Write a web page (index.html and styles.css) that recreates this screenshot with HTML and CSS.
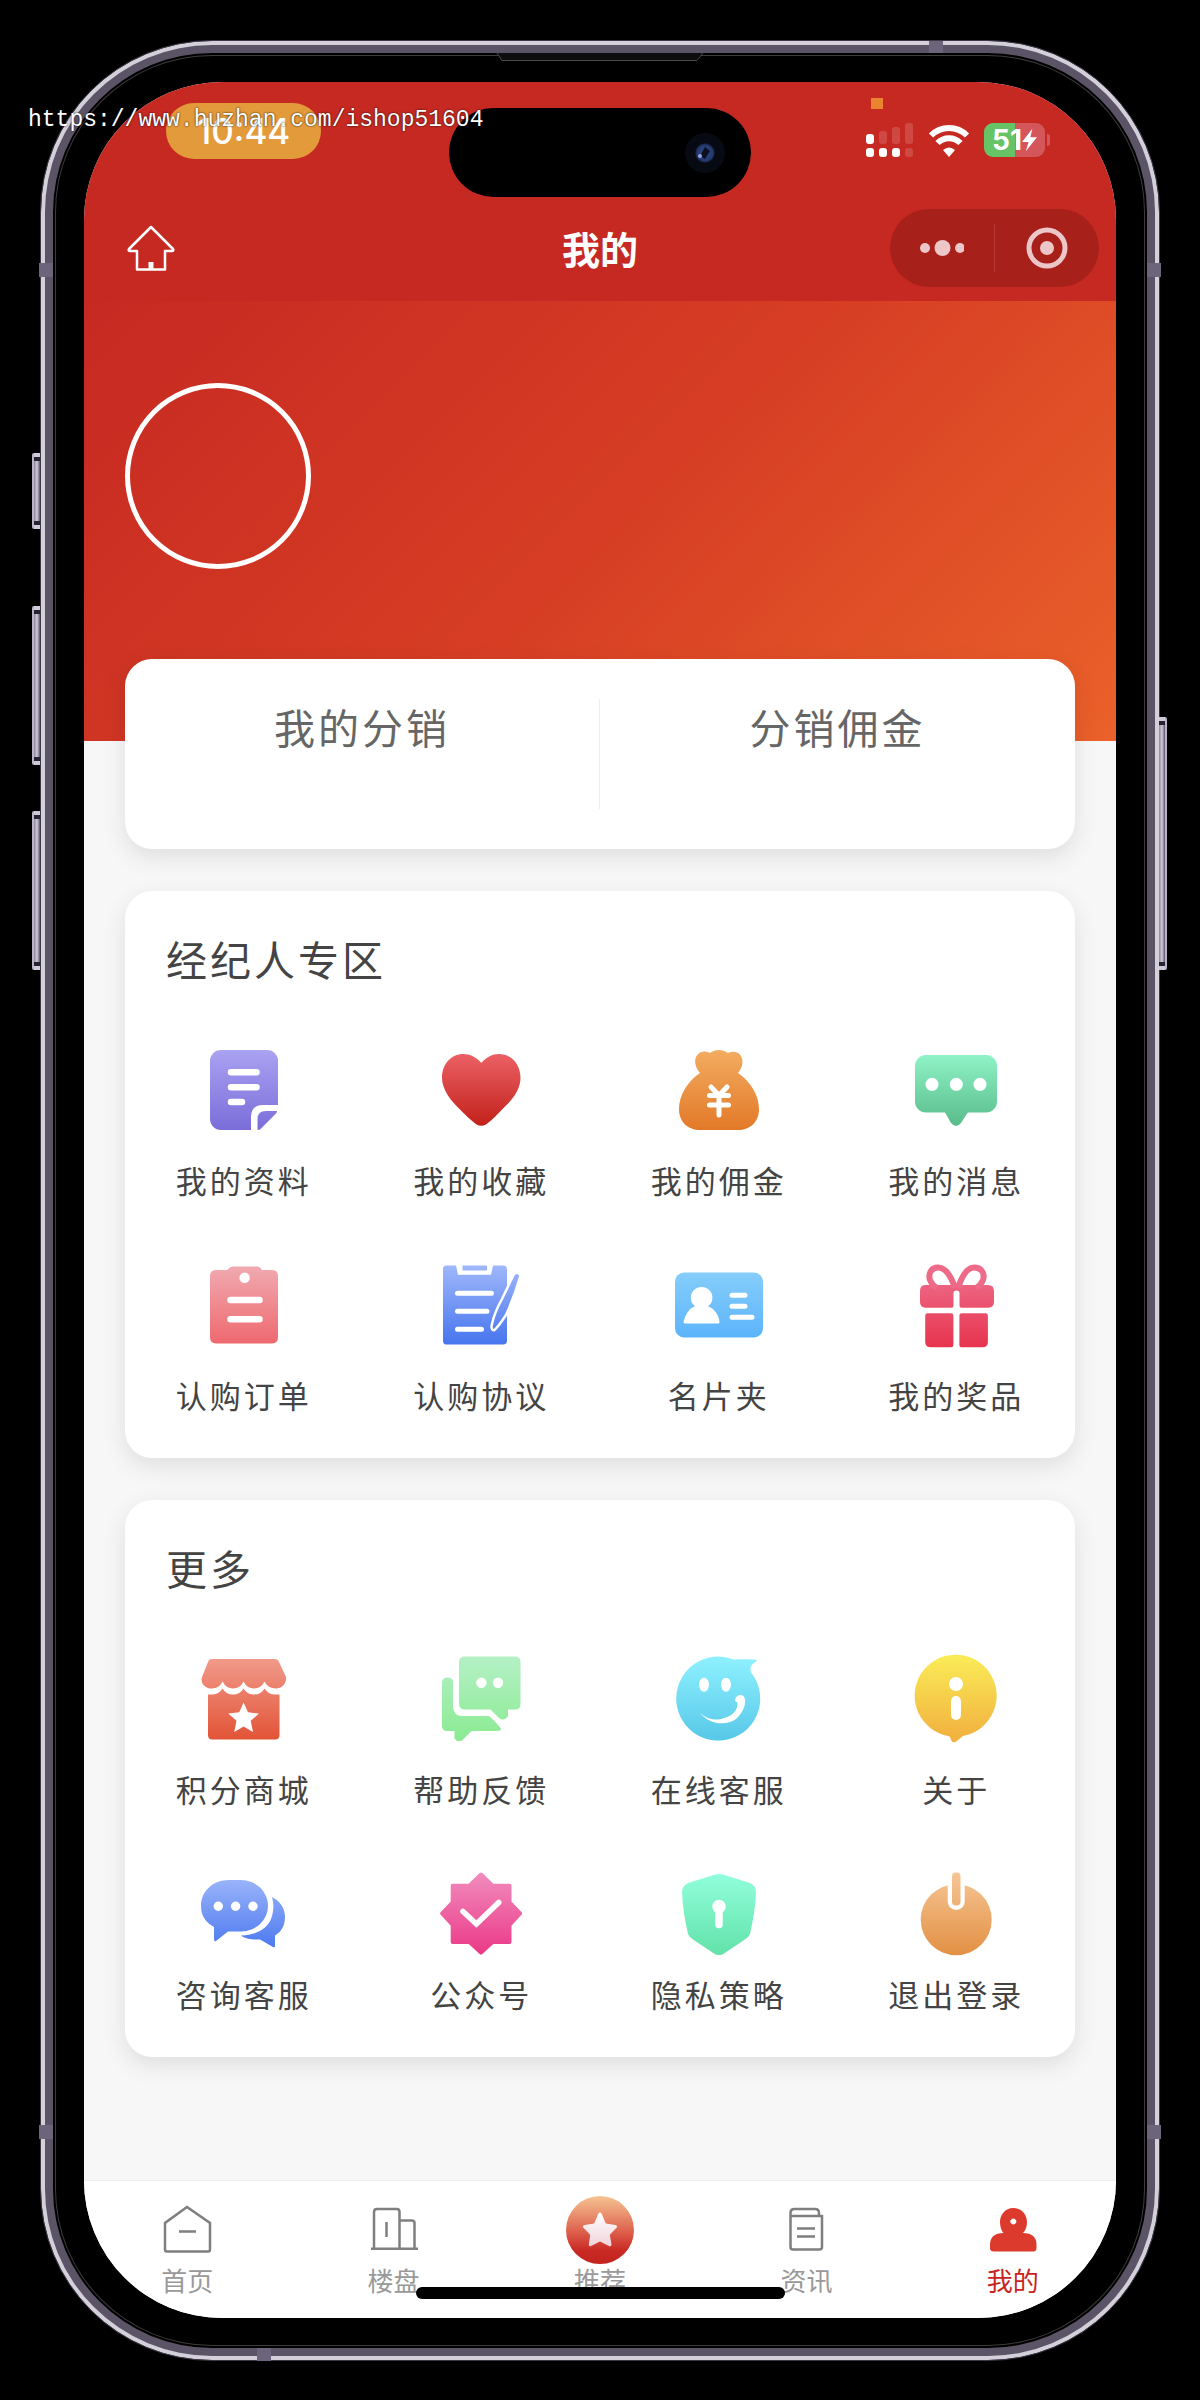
FILE: index.html
```html
<!DOCTYPE html>
<html lang="zh-CN">
<head>
<meta charset="utf-8">
<meta name="viewport" content="width=device-width, initial-scale=1">
<title>我的</title>
<link rel="stylesheet" href="styles.css">
</head>
<body>
<svg class="defs" aria-hidden="true">
  <defs>
    <linearGradient id="violet" gradientUnits="userSpaceOnUse" x1="0" y1="5" x2="0" y2="85"><stop stop-color="#aaa2f2"/><stop offset="1" stop-color="#7b6dd9"/></linearGradient>
    <linearGradient id="red" gradientUnits="userSpaceOnUse" x1="0" y1="5" x2="0" y2="80"><stop stop-color="#ed6469"/><stop offset="1" stop-color="#c3221b"/></linearGradient>
    <linearGradient id="orange" gradientUnits="userSpaceOnUse" x1="0" y1="5" x2="0" y2="85"><stop stop-color="#f3ac61"/><stop offset="1" stop-color="#e27928"/></linearGradient>
    <linearGradient id="green" gradientUnits="userSpaceOnUse" x1="0" y1="8" x2="0" y2="80"><stop stop-color="#90f4c8"/><stop offset="1" stop-color="#59bc8b"/></linearGradient>
    <linearGradient id="salmon" gradientUnits="userSpaceOnUse" x1="0" y1="5" x2="0" y2="85"><stop stop-color="#f0abb1"/><stop offset="1" stop-color="#ee686e"/></linearGradient>
    <linearGradient id="blue" gradientUnits="userSpaceOnUse" x1="0" y1="5" x2="0" y2="83"><stop stop-color="#a0b8fb"/><stop offset="1" stop-color="#4876ee"/></linearGradient>
    <linearGradient id="sky" gradientUnits="userSpaceOnUse" x1="0" y1="10" x2="0" y2="78"><stop stop-color="#87cefb"/><stop offset="1" stop-color="#5bb4fa"/></linearGradient>
    <linearGradient id="rose" gradientUnits="userSpaceOnUse" x1="0" y1="5" x2="0" y2="86"><stop stop-color="#ef7391"/><stop offset="1" stop-color="#e7344f"/></linearGradient>
    <linearGradient id="brick" gradientUnits="userSpaceOnUse" x1="0" y1="5" x2="0" y2="86"><stop stop-color="#f19a8a"/><stop offset="1" stop-color="#e25336"/></linearGradient>
    <linearGradient id="mint" gradientUnits="userSpaceOnUse" x1="0" y1="4" x2="0" y2="86"><stop stop-color="#b4f0c5"/><stop offset="1" stop-color="#8aeb92"/></linearGradient>
    <linearGradient id="cyan" gradientUnits="userSpaceOnUse" x1="0" y1="4" x2="0" y2="88"><stop stop-color="#8ef0ff"/><stop offset="1" stop-color="#56c7e7"/></linearGradient>
    <linearGradient id="yellow" gradientUnits="userSpaceOnUse" x1="0" y1="4" x2="0" y2="86"><stop stop-color="#faea56"/><stop offset="1" stop-color="#f1b03f"/></linearGradient>
    <linearGradient id="pink" gradientUnits="userSpaceOnUse" x1="0" y1="5" x2="0" y2="86"><stop stop-color="#f18abd"/><stop offset="1" stop-color="#eb3886"/></linearGradient>
    <linearGradient id="jade" gradientUnits="userSpaceOnUse" x1="0" y1="6" x2="0" y2="86"><stop stop-color="#90fedb"/><stop offset="1" stop-color="#62e2a9"/></linearGradient>
    <linearGradient id="amber" gradientUnits="userSpaceOnUse" x1="0" y1="5" x2="0" y2="86"><stop stop-color="#f6c594"/><stop offset="1" stop-color="#e29043"/></linearGradient>
    <linearGradient id="sunset" x1="0" y1="0" x2="0" y2="1"><stop stop-color="#f6c492"/><stop offset=".5" stop-color="#df6550"/><stop offset=".8" stop-color="#c92a24"/><stop offset="1" stop-color="#c3231e"/></linearGradient>
    <linearGradient id="starlight" x1="0" y1="0" x2="0" y2="1"><stop stop-color="#fff"/><stop offset="1" stop-color="#f0d3db"/></linearGradient>
    <radialGradient id="lens"><stop stop-color="#10131f"/><stop offset=".35" stop-color="#2c4480"/><stop offset=".8" stop-color="#24386c"/><stop offset="1" stop-color="#0b1120"/></radialGradient>
  </defs>
</svg>

<div class="phone">
  <span class="side-key side-key--mute"></span>
  <span class="side-key side-key--up"></span>
  <span class="side-key side-key--down"></span>
  <span class="side-key side-key--power"></span>
  <span class="band band--left-top"></span>
  <span class="band band--right-top"></span>
  <span class="band band--left-bottom"></span>
  <span class="band band--right-bottom"></span>
  <span class="band band--top"></span>
  <span class="band band--bottom"></span>
  <svg class="earpiece" viewBox="0 0 208 9" aria-hidden="true"><path d="M1 0L6 7.500H201L207 0" fill="#0d0d0d" stroke="#4a4a4a"/></svg>

  <div class="screen">
    <header class="topbar">
      <div class="status">
        <span class="status__time">10:44</span>
        <div class="status__icons">
          <svg width="48" height="36" viewBox="0 0 48 36" fill="#fff" aria-label="信号">
            <rect y="11" width="8" height="10" rx="3"/><rect y="25" width="8" height="9" rx="3"/>
            <rect x="13" y="25" width="8" height="9" rx="3"/><rect x="26" y="25" width="8" height="9" rx="3"/>
            <g opacity=".15"><rect x="13" y="8" width="8" height="13" rx="3"/><rect x="26" y="4" width="8" height="17" rx="3"/><rect x="39" width="8" height="21" rx="3"/><rect x="39" y="25" width="8" height="9" rx="3"/></g>
          </svg>
          <svg width="42" height="36" viewBox="0 0 42 36" aria-label="无线网络">
            <g fill="none" stroke="#fff" stroke-width="6"><path d="M3 12.500C13 2.500 29 2.500 39 12.500"/><path d="M9.500 20C16 13.500 26 13.500 32.500 20"/></g>
            <path d="M15 27Q21 22 27 27L21 34z" fill="#fff"/>
          </svg>
          <div class="battery">
            <span class="battery__level">51</span>
            <svg class="battery__bolt" viewBox="0 0 16 24" aria-hidden="true"><path d="M11 0L0 14H7L4 24L16 9H9z" fill="#fff"/></svg>
          </div>
        </div>
      </div>
      <div class="nav">
        <button class="nav__home" type="button" aria-label="首页">
          <svg viewBox="0 0 48 46" fill="none" stroke="#fff" stroke-width="2.500" stroke-linejoin="round"><path d="M24 2L46 24Q47 26 45 26H38V44.500H10V26H3Q1 26 2 24z"/><path d="M24 37V44" stroke-width="5"/></svg>
        </button>
        <h1 class="nav__title">我的</h1>
        <div class="capsule">
          <button type="button" aria-label="更多"><svg viewBox="0 0 44 44" fill="#ecc6c9"><circle cx="5" cy="22" r="5"/><circle cx="22.500" cy="22" r="8"/><circle cx="40" cy="22" r="5"/></svg></button>
          <button type="button" aria-label="关闭"><svg viewBox="0 0 44 44"><circle cx="22" cy="22" r="18" fill="none" stroke="#ecc6c9" stroke-width="5"/><circle cx="22" cy="22" r="7" fill="#ecc6c9"/></svg></button>
        </div>
      </div>
      <span class="island"><svg viewBox="0 0 40 40" aria-hidden="true"><circle cx="20" cy="20" r="20" fill="#070a12"/><circle cx="20" cy="20" r="10" fill="url(#lens)"/><path d="M15 23L20 14L25 18L20 26z" fill="#0c1020"/><circle cx="15" cy="23" r="2" fill="#8fa6de"/></svg></span>
      <span class="rec"></span>
    </header>

    <main class="content">
      <section class="hero"><div class="avatar"></div></section>

      <div class="cards">
        <section class="card stats">
          <a href="#team">我的分销</a>
          <a href="#commission">分销佣金</a>
        </section>

        <section class="card menu">
          <h2>经纪人专区</h2>
          <div class="menu__grid">
            <a class="item" href="#profile">
              <svg viewBox="0 0 90 90"><g fill="url(#violet)"><path d="M22 5H68a11 11 0 0 1 11 11V60H64Q52 60 52 72V85H22A11 11 0 0 1 11 74V16A11 11 0 0 1 22 5z"/><path d="M78 66H67Q58.500 66 58.500 74V85L61 84.500L77.500 68z"/></g><path d="M32 27.300H57.500M32 42.300H57.500M32 57H43" stroke="#fff" stroke-width="6.500" stroke-linecap="round"/></svg>
              <span>我的资料</span></a>
            <a class="item" href="#favorites">
              <svg viewBox="0 0 90 90"><path fill="url(#red)" d="M45.300 17.700C40 12 34 9 27.500 9C15 9 6 19 6 33C6 43 13 53 20 60.500C28 69 36 76 40.500 79.500Q45.300 82 50 79.500C55 76 62 69 70 60.500C78 53 84.500 43 84.500 33C84.500 19 75 9 63 9C56 9 51 12 45.300 17.700z"/></svg>
              <span>我的收藏</span></a>
            <a class="item" href="#money">
              <svg viewBox="0 0 90 90"><path fill="url(#orange)" d="M26 28C20 21 19 12 26 7.500C30 6 33 6.500 36 8C41 4 49 4 54 8C58 6 63 6 66 9.500C70 15 69 22 64 28C76 36 85 50 85 64C85 77 76 85 64 85H26C14 85 5 77 5 64C5 50 14 36 26 28z"/><path d="M37 42L45 50.500L53 42M45 50.500V70M35.500 50.500H54.500M35.500 60H54.500" fill="none" stroke="#fff" stroke-width="5" stroke-linecap="round"/></svg>
              <span>我的佣金</span></a>
            <a class="item" href="#messages">
              <svg viewBox="0 0 90 90"><path fill="url(#green)" d="M15 10H75a11 11 0 0 1 11 11V56.500a11 11 0 0 1-11 11H57Q55 70 50 78Q45 84 40 78L34 67.500H15a11 11 0 0 1-11-11V21A11 11 0 0 1 15 10z"/><g fill="#fff"><circle cx="21" cy="39.300" r="6.500"/><circle cx="45.300" cy="39.300" r="6.500"/><circle cx="69" cy="39.300" r="6.500"/></g></svg>
              <span>我的消息</span></a>
            <a class="item" href="#orders">
              <svg viewBox="0 0 90 90"><path fill="url(#salmon)" d="M17 10H28Q31 6.500 34 6.500H58Q61 6.500 63 10H73q6 0 6 6V77q0 6.500-6 6.500H17q-6 0-6-6.500V16q0-6 6-6z"/><circle cx="45.600" cy="17.700" r="5.200" fill="#fff"/><path d="M31.500 40H60.500M31.500 59.300H60.500" stroke="#fff" stroke-width="6.500" stroke-linecap="round"/></svg>
              <span>认购订单</span></a>
            <a class="item" href="#agreement">
              <svg viewBox="0 0 90 90"><g fill="url(#blue)"><path d="M10 5.500H20L22 14.700H55L57 5.500H67q4 0 4 4V80.500q0 4-4 4H10q-3 0-3-4V9q0-3.500 3-3.500z"/><path d="M26.500 5.500H51V10.500H26.500z"/><path d="M77.500 15C80 11 85 13 84 17C80 31 75 44 70 55C66 61 62 67 58.500 70C55.500 71 55 67 56 64C58 55 62 46 66 39z" stroke="#fff" stroke-width="2.500"/></g><path d="M21.500 33.300H55.500M21.500 51.300H51M21.500 69.300H45.500" stroke="#fff" stroke-width="5" stroke-linecap="round"/></svg>
              <span>认购协议</span></a>
            <a class="item" href="#cards">
              <svg viewBox="0 0 90 90"><rect x="1" y="12.500" width="88" height="65" rx="9" fill="url(#sky)"/><g fill="#fff"><circle cx="27.600" cy="37.700" r="10.800"/><path d="M22 46H33C40 48 45 55 45.500 62Q45.500 63.500 44 63.500H11Q9.500 63.500 9.500 62C11 55 15 48 22 46z"/></g><path d="M58 35.300H71M58 46.300H71M58 57.300H78" stroke="#fff" stroke-width="5" stroke-linecap="round"/></svg>
              <span>名片夹</span></a>
            <a class="item" href="#prizes">
              <svg viewBox="0 0 90 90"><g fill="url(#rose)"><path d="M14 25H77q6 0 6 6V42q0 5.700-6 5.700H50.500Q48.500 47.700 48.500 45.700V33Q48.500 30.500 45.500 30.500T42.500 33V45.700Q42.500 47.700 40.500 47.700H14.500Q9 47.700 9 42V31q0-6 5-6z"/><path d="M16.500 53.300H40q2.400 0 2.400 2.400V85q0 2.300-2.400 2.300H20q-5.800 0-5.800-5.300V55.700q0-2.400 2.300-2.400z"/><path d="M51 53.300H74.500q2.400 0 2.400 2.400V82q0 5.300-5.500 5.300H51q-2.600 0-2.600-2.300V55.700q0-2.400 2.600-2.400z"/></g><path d="M44 28C39 13 33 7.500 27 7.500C20 7.500 17 14 19 20Q21 25 26 28M47 28C52 13 57 7.500 63 7.500C71 7.500 74 14 72 20Q70 25 65 28" fill="none" stroke="#ed6a88" stroke-width="6"/></svg>
              <span>我的奖品</span></a>
          </div>
        </section>

        <section class="card menu">
          <h2>更多</h2>
          <div class="menu__grid">
            <a class="item" href="#mall">
              <svg viewBox="0 0 90 90"><g fill="url(#brick)"><path d="M13 5H76q3 0 4 3L87 23C88 29 83 34.500 77 34.500Q69 34.500 65.600 27.500Q62 34.500 55 34.500Q48 34.500 44.600 27.500Q41 34.500 34 34.500Q27 34.500 23.600 27.500Q20 34.500 13 34.500C6 34.500 1 29 3 23L9 8Q10 5 13 5z"/><path d="M9 40.500H14Q20 40 23.600 34.500Q27 40.500 34 40.500Q41 40.500 44.600 34.500Q48 40.500 55 40.500Q62 40.500 65.600 34.500Q69 40 75 40.500H80.500V81q0 4.500-4.500 4.500H13.500q-4.500 0-4.500-4.500z"/></g><path fill="#fff" d="M44.600 48.500L49 58.200L60 59.500L51.700 66.800L54 78L44.600 72.500L35.200 78L37.500 66.800L29.200 59.500L40.200 58.200z"/></svg>
              <span>积分商城</span></a>
            <a class="item" href="#feedback">
              <svg viewBox="0 0 90 90"><g fill="url(#mint)"><path d="M29 2.500H79q5.500 0 5.500 5.500V50q0 5.500-5.500 5.500H72V62Q68 68 63 64L54.500 55.500H29q-6 0-6-6V8q0-5.500 6-5.500z"/><path d="M11.500 23.500Q17 23.500 17 28V52Q17 62 27 62H53Q57 65 65 74.500Q65 77 61 77H35.500L26 86.500Q21 89 18.500 84V77H11Q6 77 6 72V29Q6 23.500 11.500 23.500z"/></g><circle cx="45.400" cy="28.800" r="5.200" fill="#fff"/><circle cx="62" cy="28.800" r="5.200" fill="#fff"/></svg>
              <span>帮助反馈</span></a>
            <a class="item" href="#service">
              <svg viewBox="0 0 90 90"><path fill="url(#cyan)" d="M59.500 5.500Q70 5 81 5.500Q84 6 82 7.500Q74 12 77.500 19A42 42 0 1 1 59.500 5.500z"/><g fill="#fff"><ellipse cx="30" cy="30.700" rx="5" ry="7"/><ellipse cx="52" cy="30.700" rx="5" ry="7"/><path d="M26 59C33 65 40 66.500 47 65C57 63 64 57 63.500 48.500L61 47C61 42 66 39 70 42.500C73 48 70 58 62 65C52 72 36 71 26 59z"/></g></svg>
              <span>在线客服</span></a>
            <a class="item" href="#about">
              <svg viewBox="0 0 90 90"><path fill="url(#yellow)" d="M38.500 82.200A41 41 0 1 1 52 82L44.500 88Q42 89 40.500 87z"/><circle cx="45" cy="30" r="7" fill="#fff"/><path d="M45 47V61" stroke="#fff" stroke-width="10" stroke-linecap="round"/></svg>
              <span>关于</span></a>
            <a class="item item--tight" href="#consult">
              <svg viewBox="0 0 90 90"><g fill="url(#blue)"><path d="M30 11H42A27 25.700 0 0 1 42 62.500H29L17 72Q15 73 15 70V58C6 53 2 46 2 37C2 22 14 11 30 11z"/><path d="M73 28C81 32 86 39 86 48C86 57 82 63 76 66.500V77Q76 79 74 78L61 70.500C54 71 46 70 42 66.500C57 66 68 60 72 50C75 42 75 35 73 28z"/></g><g fill="#fff"><circle cx="19.300" cy="37.300" r="4.700"/><circle cx="36.600" cy="37.300" r="4.700"/><circle cx="54" cy="37.300" r="4.700"/></g></svg>
              <span>咨询客服</span></a>
            <a class="item item--tight" href="#official">
              <svg viewBox="0 0 90 90"><path fill="url(#pink)" stroke="url(#pink)" stroke-width="4" stroke-linejoin="round" d="M45 5.500L56.500 16.700H73.500V33.500L84 44.500L73.500 56V73H56.500L45 83.500L33.500 73H16.700V56L6.200 44.500L16.700 33.500V16.700H33.500z"/><path d="M27 42.500L40.400 55L62.700 33.500" fill="none" stroke="#fff" stroke-width="5.500" stroke-linecap="round"/></svg>
              <span>公众号</span></a>
            <a class="item item--tight" href="#privacy">
              <svg viewBox="0 0 90 90"><path fill="url(#jade)" d="M38 6.500Q45 3.500 52 6.500L76 14Q82 17 82 23C81.500 38 79 52 76 65Q75 68 71 70.500L50 84.500Q45 87.500 40 84.500L19 70.500Q15 68 14 65C11 52 8.500 38 8 23Q8 17 14 14z"/><circle cx="45" cy="37.500" r="6.800" fill="#fff"/><path d="M45 39V55.500" stroke="#fff" stroke-width="7.500" stroke-linecap="round"/></svg>
              <span>隐私策略</span></a>
            <a class="item item--tight" href="#logout">
              <svg viewBox="0 0 90 90"><circle cx="45.200" cy="50.700" r="35.500" fill="url(#amber)"/><path d="M45.200 9V32.500" stroke="#fff" stroke-width="17" stroke-linecap="round"/><rect x="41" y="3.500" width="8.500" height="33" rx="4" fill="url(#amber)"/></svg>
              <span>退出登录</span></a>
          </div>
        </section>
      </div>
    </main>

    <nav class="tabs">
      <a href="#home"><svg viewBox="0 0 68 68"><path d="M34 11L57 27V53.500Q57 55.500 55 55.500H14Q12 55.500 12 53.500V27zM26 35.500H43"/></svg><span>首页</span></a>
      <a href="#estate"><svg viewBox="0 0 68 68"><path d="M14 52.500V16Q14 13 17 13H37Q39.500 13 39.500 16V52.500M39.500 24.500H51.500Q54.500 24.500 54.500 27V52.500M11 52.800H58M26.500 26V41"/></svg><span>楼盘</span></a>
      <a href="#recommend"><svg viewBox="0 0 68 68"><circle cx="34" cy="34" r="34" fill="url(#sunset)" stroke="none"/><path stroke="none" fill="url(#starlight)" d="M34 16.500Q35 16 36 18.500L39.800 27.500L49.500 29Q52 30 50.500 31.800L43.800 38.800L45.500 48.500Q45.500 51 43 50L34 45.500L25 50Q22.500 51 22.800 48.500L24.200 38.800L17.500 31.800Q16 30 18.500 29L28.200 27.500L32 18.500Q33 16 34 16.500z"/></svg><span>推荐</span></a>
      <a href="#news"><svg viewBox="0 0 68 68"><path d="M18.500 21V17Q18.500 13 22.500 13H43Q47 13 47 17V20M18.500 20H50V51Q50 53.500 47.500 53.500H21Q18.500 53.500 18.500 51zM25 32.500H43M25 40.500H43"/></svg><span>资讯</span></a>
      <a class="is-active" href="#me" aria-current="page"><svg viewBox="0 0 68 68"><path stroke="none" fill="#db3a2c" fill-rule="evenodd" d="M34.300 12C43 12 48 19 48 26Q48 33 44 37Q57.500 37 57.500 49V52Q57.500 55.500 54 55.500H15Q11 55.500 11 52V49Q11 37 24.500 37Q21 33 21 26C21 19 26 12 34.300 12zM34.300 22.500a3 3 0 1 0 .1 0z"/></svg><span>我的</span></a>
      <span class="home-bar"></span>
    </nav>
  </div>
  <p class="watermark">https://www.huzhan.com/ishop51604</p>
</div>
</body>
</html>
```
FILE: styles.css
```css
* {
  box-sizing: border-box;
}

body {
  margin: 0;
  padding: 40px 40px 39px;
  background: #000;
  color: #444;
  font-family: "Noto Sans CJK SC", "Noto Sans", sans-serif;
}

h1, h2, p {
  margin: 0;
  font-weight: 400;
}

a {
  color: inherit;
  text-decoration: none;
}

button {
  display: flex;
  align-items: center;
  justify-content: center;
  padding: 0;
  border: 0;
  background: none;
}

svg {
  display: block;
}

.defs {
  position: absolute;
  width: 0;
  height: 0;
}

/* Device shell */
.phone {
  position: relative;
  display: flex;
  min-height: calc(100vh - 79px);
  padding: 41px 43px 42px;
  border: 1px solid #3d3848;
  border-radius: 172px;
  background: #000;
  box-shadow:
    inset 0 0 0 4px #d3d0da,
    inset 0 0 0 12px #5b5467,
    inset 0 0 0 14px #000,
    inset 0 0 0 15px #3c3c3c;
}

.side-key {
  position: absolute;
  left: -9px;
  width: 8px;
  border-left: 2px solid #b9b3c6;
  border-radius: 2px 0 0 2px;
  background: linear-gradient(90deg, #8d859d, #d0cbdb 50%, #5a5369);
  box-shadow: inset 0 4px 0 #cfcada, inset 0 -4px 0 #cfcada, inset 0 8px 0 #272331, inset 0 -8px 0 #272331;
}

.side-key--mute {
  top: 412px;
  height: 76px;
}

.side-key--up {
  top: 565px;
  height: 159px;
}

.side-key--down {
  top: 770px;
  height: 159px;
}

.side-key--power {
  top: 676px;
  right: -8px;
  left: auto;
  height: 253px;
  border-right: 2px solid #b9b3c6;
  border-left: 0;
  border-radius: 0 2px 2px 0;
}

.band {
  position: absolute;
  width: 14px;
  height: 14px;
  background: #6c647b;
}

.band--left-top,
.band--left-bottom {
  left: -2px;
}

.band--right-top,
.band--right-bottom {
  right: -2px;
}

.band--left-top,
.band--right-top {
  top: 222px;
}

.band--left-bottom,
.band--right-bottom {
  bottom: 221px;
}

.band--top {
  top: 0;
  left: 888px;
  height: 12px;
}

.band--bottom {
  bottom: -1px;
  left: 216px;
  height: 13px;
}

.earpiece {
  position: absolute;
  top: 12px;
  left: 50%;
  width: 208px;
  height: 9px;
  margin-left: -104px;
}

.screen {
  display: flex;
  flex: 1;
  flex-direction: column;
  overflow: hidden;
  border-radius: 138px;
  background: #f7f7f7;
}

/* Status bar and title */
.topbar {
  position: relative;
  background: #c62922;
  color: #fff;
}

.status {
  display: flex;
  align-items: flex-end;
  justify-content: space-between;
  padding: 21px 66px 0 82px;
}

.status__time {
  width: 155px;
  border-radius: 28px;
  background: #e39a3b;
  font: 500 35px/56px Inter, sans-serif;
  text-align: center;
}

.status__icons {
  display: flex;
  align-items: center;
  gap: 14px;
}

.battery {
  position: relative;
  display: flex;
  align-items: center;
  justify-content: center;
  width: 61px;
  height: 34px;
  margin: 0 5px 2px 0;
  border-radius: 9px;
  background: linear-gradient(90deg, #66c466 51%, #d4555a 51%);
}

.battery::after {
  position: absolute;
  top: 11px;
  right: -5px;
  width: 3px;
  height: 12px;
  border-radius: 0 3px 3px 0;
  background: #d4555a;
  content: "";
}

.battery__level {
  font: 700 28px/34px Inter, sans-serif;
}

.battery__bolt {
  width: 15px;
  height: 24px;
}

.nav {
  display: grid;
  grid-template-columns: 1fr auto 1fr;
  align-items: center;
  padding: 50px 17px 14px;
}

.nav__home {
  justify-self: start;
  margin-left: 26px;
}

.nav__home svg {
  width: 48px;
  height: 46px;
}

.nav__title {
  font-size: 38px;
  font-weight: 700;
  line-height: 56px;
}

.capsule {
  display: flex;
  justify-self: end;
  width: 209px;
  height: 78px;
  padding: 15px 0;
  border-radius: 39px;
  background: #a8201a;
}

.capsule button {
  flex: 1;
}

.capsule button + button {
  border-left: 1px solid #b53a35;
}

.capsule svg {
  width: 44px;
  height: 44px;
}

.island {
  position: absolute;
  top: 26px;
  left: 50%;
  width: 302px;
  height: 89px;
  margin-left: -151px;
  padding: 25px 26px;
  border-radius: 45px;
  background: #000;
}

.island svg {
  width: 40px;
  height: 40px;
  margin-left: auto;
}

.rec {
  position: absolute;
  top: 16px;
  right: 233px;
  width: 12px;
  height: 11px;
  background: #ea8430;
}

/* Page content */
.content {
  flex: 1;
}

.hero {
  padding: 82px 41px 172px;
  background: linear-gradient(135deg, #c62922, #d63d24 50%, #ea612a);
}

.avatar {
  width: 186px;
  height: 186px;
  border: 5px solid #fff;
  border-radius: 50%;
}

.cards {
  display: flex;
  flex-direction: column;
  gap: 42px;
  margin: -82px 41px 40px;
}

.card {
  border-radius: 27px;
  background: #fff;
  box-shadow: 0 8px 24px rgba(0, 0, 0, 0.1);
  letter-spacing: 3px;
}

.stats {
  display: grid;
  grid-template-columns: 1fr 1fr;
  padding: 40px 0;
  color: #666;
  font-size: 41px;
  line-height: 54px;
  text-align: center;
}

.stats a {
  min-height: 110px;
}

.stats a:first-child {
  border-right: 1px solid #eee;
}

.menu {
  padding: 39px 0 40px;
}

.menu h2 {
  margin: 0 41px 59px;
  font-size: 41px;
  line-height: 56px;
}

.menu__grid {
  display: grid;
  grid-template-columns: repeat(4, 1fr);
  row-gap: 57px;
}

.item {
  display: flex;
  flex-direction: column;
  align-items: center;
  gap: 22px;
  font-size: 31px;
  line-height: 46px;
}

.item--tight {
  gap: 12px;
}

.item svg {
  width: 90px;
  height: 90px;
}

/* Tab bar */
.tabs {
  position: relative;
  display: grid;
  grid-template-columns: repeat(5, 1fr);
  padding: 15px 0 22px;
  border-top: 1px solid #ededed;
  background: #fff;
  color: #999;
}

.tabs a {
  display: flex;
  flex-direction: column;
  align-items: center;
  font-size: 26px;
  line-height: 32px;
}

.tabs svg {
  width: 68px;
  height: 68px;
  fill: none;
  stroke: #7f7f7f;
  stroke-width: 2.5;
}

.tabs .is-active {
  color: #c9231e;
}

.home-bar {
  position: absolute;
  bottom: 19px;
  left: 50%;
  width: 369px;
  height: 12px;
  margin-left: -184px;
  border-radius: 6px;
  background: #000;
}

.watermark {
  position: absolute;
  top: 64px;
  left: -13px;
  color: #fff;
  font: 23px/30px "Liberation Mono", monospace;
  text-shadow: 0 0 2px #000;
}
```
